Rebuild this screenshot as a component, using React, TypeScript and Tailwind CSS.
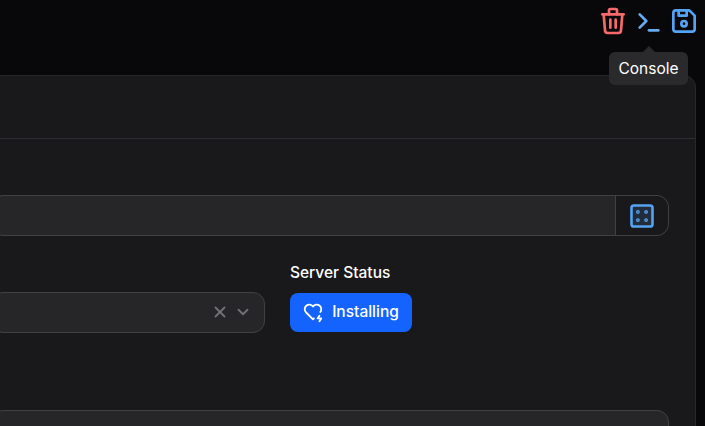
import { TbChevronDown, TbDeviceFloppy, TbDice4, TbHeartBolt, TbTerminal, TbTrash, TbX } from 'react-icons/tb'

export default function App() {
  return (
    <div className="w-[705px] h-[426px] overflow-hidden bg-[#08080a] font-['Inter',sans-serif] text-white">
      {/* Top actions */}
      <div className="relative h-[75px] flex justify-end items-start gap-[3px] pt-[5px] pr-[5px]">
        <button className="text-[#f8696b] mr-px">
          <TbTrash size={32} strokeWidth={2} />
        </button>
        <button className="text-[#68aaf0]">
          <TbTerminal size={32} strokeWidth={2} />
        </button>
        <button className="text-[#55a3f5]">
          <TbDeviceFloppy size={32} strokeWidth={2} />
        </button>

        {/* Tooltip */}
        <div className="absolute left-[609px] top-[52px] h-[33px] w-[79px] rounded-md bg-[#2a2a2c] flex items-center justify-center text-[15.5px] z-10">
          <span className="absolute -top-[6px] left-[34px] w-0 h-0 border-x-[6px] border-x-transparent border-b-[6px] border-b-[#2a2a2c]"></span>
          Console
        </div>
      </div>

      {/* Card */}
      <div className="-ml-[10px] w-[706px] h-[400px] rounded-xl border border-[#27272a] bg-[#19191b]">
        <div className="h-[63px] border-b border-[#2e2e32]"></div>

        <div className="pt-[56px] pr-[26px]">
          <div className="h-[41px] flex rounded-xl border border-[#414144] bg-[#262628]">
            <div className="flex-1"></div>
            <div className="w-[53px] flex items-center justify-center border-l border-[#414144] bg-[#19191b] rounded-r-xl text-[#55a3f5]">
              <TbDice4 size={28} strokeWidth={2.2} className="fill-[#55a3f5]/15" />
            </div>
          </div>

          <div className="flex gap-[25px] mt-[27px]">
            <div className="w-[274px] pt-[29px]">
              <div className="h-[41px] flex items-center justify-end gap-[5px] pr-[12px] pb-px rounded-xl border border-[#414144] bg-[#262628] text-[#71717a]">
                <TbX size={18} strokeWidth={2.4} />
                <TbChevronDown size={18} strokeWidth={2.4} />
              </div>
            </div>
            <div>
              <div className="text-[15.5px] font-medium leading-[20px]">Server Status</div>
              <button className="mt-[10px] h-[39px] w-[122px] pb-[2px] pr-px rounded-lg bg-[#1463ff] flex items-center justify-center gap-[8px] text-[15.5px] font-medium">
                <TbHeartBolt size={22} strokeWidth={2} />
                Installing
              </button>
            </div>
          </div>

          <div className="h-[41px] mt-[77px] rounded-xl border border-[#414144] bg-[#262628]"></div>
        </div>
      </div>
    </div>
  )
}
